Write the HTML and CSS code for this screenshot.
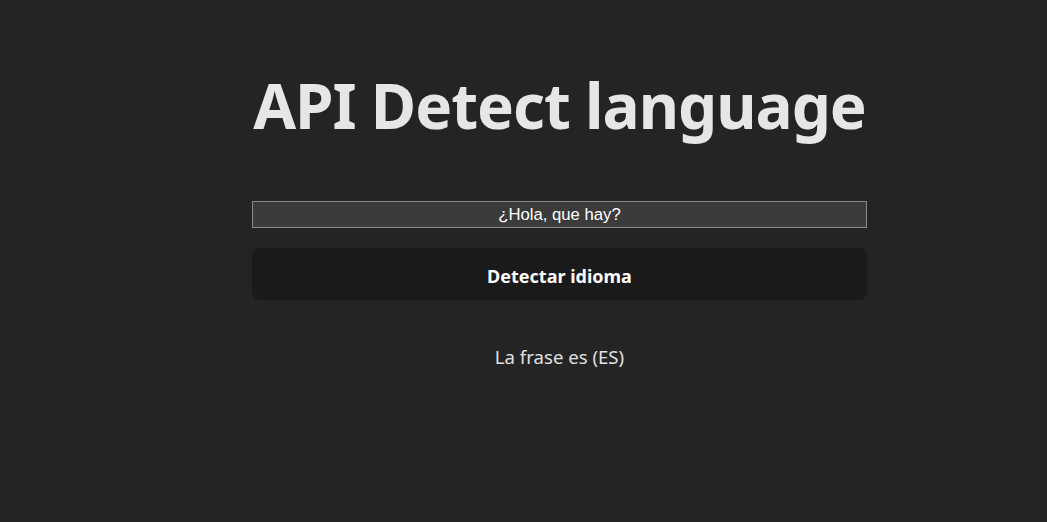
FILE: index.html
```html
<!DOCTYPE html>
<html lang="es">
<head>
<meta charset="utf-8">
<title>API Detect language</title>
<link rel="stylesheet" href="styles.css">
</head>
<body>
<main class="app">
  <h1 class="title">API Detect language</h1>
  <input class="phrase" type="text" value="¿Hola, que hay?">
  <button class="detect" type="button">Detectar idioma</button>
  <p class="result">La frase es (ES)</p>
</main>
</body>
</html>
```

FILE: styles.css
```css
html, body {
  margin: 0;
  padding: 0;
  background: #242424;
  height: 100%;
}
body {
  font-family: "Noto Sans", "Open Sans", sans-serif;
  color: rgba(255, 255, 255, 0.87);
}
.app {
  width: 615px;
  margin-left: 252px;
  display: flex;
  flex-direction: column;
  padding-top: 63px;
}
.title {
  margin: 0;
  font-size: 62px;
  font-weight: 700;
  line-height: 84px;
  text-align: center;
  color: #e6e6e6;
  letter-spacing: -1px;
}
.phrase {
  margin-top: 54px;
  height: 27px;
  box-sizing: border-box;
  background: #3b3b3b;
  border: 1px solid #8a8a8a;
  color: #ffffff;
  font-family: "Liberation Sans", Arial, sans-serif;
  font-size: 16.7px;
  text-align: center;
  padding: 0;
  outline: none;
}
.detect {
  margin-top: 20px;
  height: 52px;
  padding: 3px 0 0;
  border: none;
  border-radius: 8px;
  background: #1a1a1a;
  color: #ffffff;
  font-family: "Noto Sans", "Open Sans", sans-serif;
  font-size: 18px;
  font-weight: 700;
  cursor: pointer;
}
.result {
  margin: 44px 0 0;
  text-align: center;
  font-size: 18.6px;
  color: #e0e0e0;
}
```
